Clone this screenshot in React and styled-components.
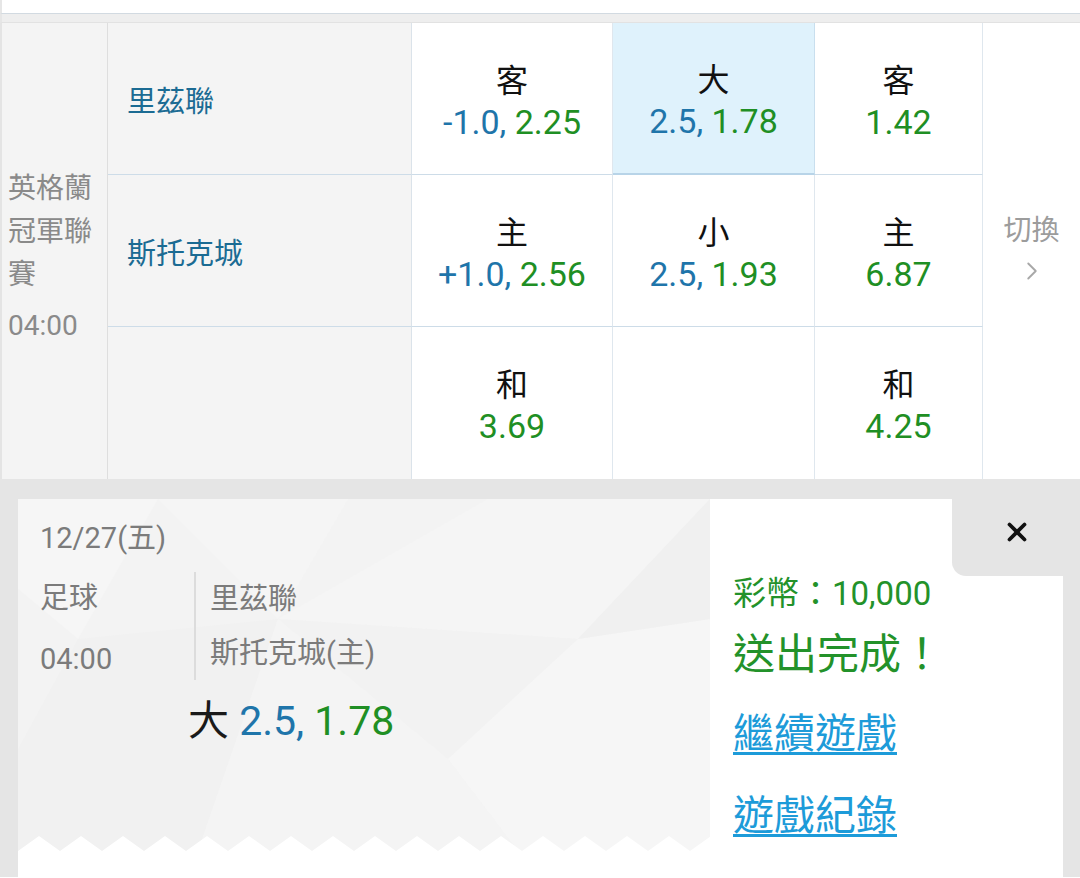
import styled, { createGlobalStyle } from "styled-components";
import { X, ChevronRight } from "lucide-react";

const GlobalStyle = createGlobalStyle`
  body {
    margin: 0;
    background: #ffffff;
    font-family: Roboto, "Noto Sans CJK TC", sans-serif;
  }
`;

const rows = [
  {
    team: "里茲聯",
    cells: [
      { label: "客", line: "-1.0", odds: "2.25" },
      { label: "大", line: "2.5", odds: "1.78", active: true },
      { label: "客", odds: "1.42" },
    ],
  },
  {
    team: "斯托克城",
    cells: [
      { label: "主", line: "+1.0", odds: "2.56" },
      { label: "小", line: "2.5", odds: "1.93" },
      { label: "主", odds: "6.87" },
    ],
  },
  {
    team: "",
    cells: [{ label: "和", odds: "3.69" }, null, { label: "和", odds: "4.25" }],
  },
];

function zigzag(width, period, height) {
  const pts = [`0,${height}`];
  for (let x = 0; x <= width + period; x += period) {
    pts.push(`${x},${height}`, `${x + period / 2},0`);
  }
  pts.push(`${width + period},${height}`);
  return pts.join(" ");
}

function App() {
  return (
    <Page>
      <GlobalStyle />
      <TopBar />
      <TopBand />
      <Board>
        <League>
          <LeagueName>英格蘭冠軍聯賽</LeagueName>
          <LeagueTime>04:00</LeagueTime>
        </League>
        {rows.map((row, i) => [
          <Team key={`t${i}`} $last={i === rows.length - 1}>
            {row.team}
          </Team>,
          ...row.cells.map((c, j) => (
            <Odds key={`c${i}${j}`} $last={i === rows.length - 1} $active={c && c.active}>
              {c && (
                <>
                  <Label>{c.label}</Label>
                  <Value>
                    {c.line && <Line>{c.line}, </Line>}
                    <Price>{c.odds}</Price>
                  </Value>
                </>
              )}
            </Odds>
          )),
        ])}
        <Switch>
          <span>切換</span>
          <ChevronRight size={30} strokeWidth={1.5} color="#a8a8a8" />
        </Switch>
      </Board>

      <Panel>
        <Card>
          <Ticket>
            <Pattern viewBox="0 0 692 352" preserveAspectRatio="none">
              <polygon points="0,0 140,0 60,140 0,90" fill="#f6f6f6" />
              <polygon points="140,0 330,0 260,120" fill="#f5f5f5" />
              <polygon points="60,140 260,120 180,352 0,352 0,250" fill="#f1f1f1" />
              <polygon points="260,120 470,0 692,0 560,140" fill="#f5f5f5" />
              <polygon points="260,120 560,140 430,260" fill="#f2f2f2" />
              <polygon points="430,260 560,140 692,120 692,352 500,352" fill="#f6f6f6" />
              <polygon points="180,352 260,120 430,260 500,352" fill="#f4f4f4" />
              <polygon points="560,140 692,0 692,120" fill="#f0f0f0" />
            </Pattern>
            <Zigzag viewBox="0 0 692 15" preserveAspectRatio="none">
              <polygon points={zigzag(692, 42, 15)} fill="#ffffff" />
            </Zigzag>
            <TicketBody>
              <DateText>12/27(五)</DateText>
              <InfoRow>
                <SportCol>
                  <div>足球</div>
                  <div>04:00</div>
                </SportCol>
                <TeamCol>
                  <div>里茲聯</div>
                  <div>斯托克城(主)</div>
                </TeamCol>
              </InfoRow>
              <BetLine>
                大 <Line>2.5, </Line>
                <Price>1.78</Price>
              </BetLine>
            </TicketBody>
          </Ticket>
          <Result>
            <Coins>彩幣：10,000</Coins>
            <Done>送出完成！</Done>
            <TextLink href="#" $gap={23}>繼續遊戲</TextLink>
            <TextLink href="#" $gap={26}>遊戲紀錄</TextLink>
          </Result>
          <CloseTab>
            <X size={30} strokeWidth={3} color="#111" />
          </CloseTab>
        </Card>
      </Panel>
    </Page>
  );
}

const Page = styled.div`
  width: 1080px;
  height: 878px;
  overflow: hidden;
  background: #ffffff;
`;

const TopBar = styled.div`
  height: 13px;
  background: #ffffff;
  border-left: 2px solid #e6e6e6;
  border-bottom: 1px solid #d2dae1;
`;

const TopBand = styled.div`
  height: 8px;
  background: #eeeeee;
  border-left: 2px solid #e6e6e6;
  border-bottom: 1px solid #e2e2e2;
`;

const Board = styled.div`
  display: grid;
  grid-template-columns: 106px 304px 201px 202px 168px 1fr;
  grid-template-rows: repeat(3, 152px);
  border-left: 2px solid #e4e4e4;
  background: #ffffff;
`;

const League = styled.div`
  grid-column: 1;
  grid-row: 1 / 4;
  display: flex;
  flex-direction: column;
  justify-content: center;
  padding: 0 5px 0 6px;
  background: #f4f4f4;
  border-right: 1px solid #dedede;
  color: #8a8a8a;
  font-size: 28px;
  line-height: 43px;
`;

const LeagueName = styled.div`
  margin-top: 12px;
`;

const LeagueTime = styled.div`
  margin-top: 8px;
`;

const Team = styled.div`
  display: flex;
  align-items: center;
  padding-left: 19px;
  background: #f4f4f4;
  border-right: 1px solid #dbe3ea;
  border-bottom: ${p => (p.$last ? "none" : "1px solid #cddce8")};
  color: #1b6b93;
  font-size: 29px;
`;

const Odds = styled.div`
  display: flex;
  flex-direction: column;
  align-items: center;
  justify-content: center;
  background: ${p => (p.$active ? "#dff2fc" : "#ffffff")};
  border-right: 1px solid ${p => (p.$active ? "#c9dfee" : "#dfe7ee")};
  border-bottom: ${p =>
    p.$last ? "none" : p.$active ? "2px solid #b8d4e8" : "1px solid #cddce8"};
  font-size: 32px;
  line-height: 41px;
  padding-top: 6px;
`;

const Label = styled.div`
  color: #111111;
`;

const Value = styled.div`
  font-size: 34px;
`;

const Line = styled.span`
  color: #1f75aa;
`;

const Price = styled.span`
  color: #1f8f24;
`;

const Switch = styled.div`
  grid-column: 6;
  grid-row: 1 / 4;
  display: flex;
  flex-direction: column;
  align-items: center;
  justify-content: center;
  gap: 8px;
  padding-bottom: 8px;
  color: #9c9c9c;
  font-size: 28px;
`;

const Panel = styled.div`
  background: #e5e5e5;
  padding: 20px 17px 0 18px;
  height: 378px;
`;

const Card = styled.div`
  position: relative;
  display: flex;
  height: 100%;
  background: #ffffff;
`;

const Ticket = styled.div`
  position: relative;
  width: 692px;
  background: #ffffff;
`;

const Pattern = styled.svg`
  position: absolute;
  left: 0;
  top: 0;
  width: 692px;
  height: 352px;
  background: #f3f3f3;
`;

const Zigzag = styled.svg`
  position: absolute;
  left: 0;
  top: 337px;
  width: 692px;
  height: 15px;
`;

const TicketBody = styled.div`
  position: relative;
  padding: 18px 0 0 22px;
  color: #7b7b7b;
  font-size: 29px;
`;

const DateText = styled.div`
  line-height: 42px;
`;

const InfoRow = styled.div`
  display: flex;
  align-items: flex-start;
  margin-top: 13px;
`;

const SportCol = styled.div`
  width: 154px;
  line-height: 61px;
  margin-top: -4px;
`;

const TeamCol = styled.div`
  border-left: 2px solid #dcdcdc;
  padding-left: 14px;
  line-height: 54px;
`;

const BetLine = styled.div`
  margin: 6px 0 0 148px;
  font-size: 41px;
  line-height: 50px;
  color: #1a1a1a;
`;

const Result = styled.div`
  display: flex;
  flex-direction: column;
  align-items: flex-start;
  padding: 75px 0 0 23px;
  color: #23922a;
`;

const Coins = styled.div`
  font-size: 33px;
  line-height: 40px;
`;

const Done = styled.div`
  margin-top: 13px;
  font-size: 42px;
  line-height: 56px;
`;

const TextLink = styled.a`
  margin-top: ${p => p.$gap}px;
  font-size: 41px;
  line-height: 56px;
  color: #1d9bd9;
  text-decoration: underline;
  text-decoration-thickness: 3px;
  text-underline-offset: 4px;
`;

const CloseTab = styled.div`
  position: absolute;
  top: 0;
  right: 0;
  width: 111px;
  height: 77px;
  display: flex;
  align-items: center;
  justify-content: center;
  padding: 0 0 12px 19px;
  box-sizing: border-box;
  background: #e5e5e5;
  border-bottom-left-radius: 14px;
`;

export default App;
